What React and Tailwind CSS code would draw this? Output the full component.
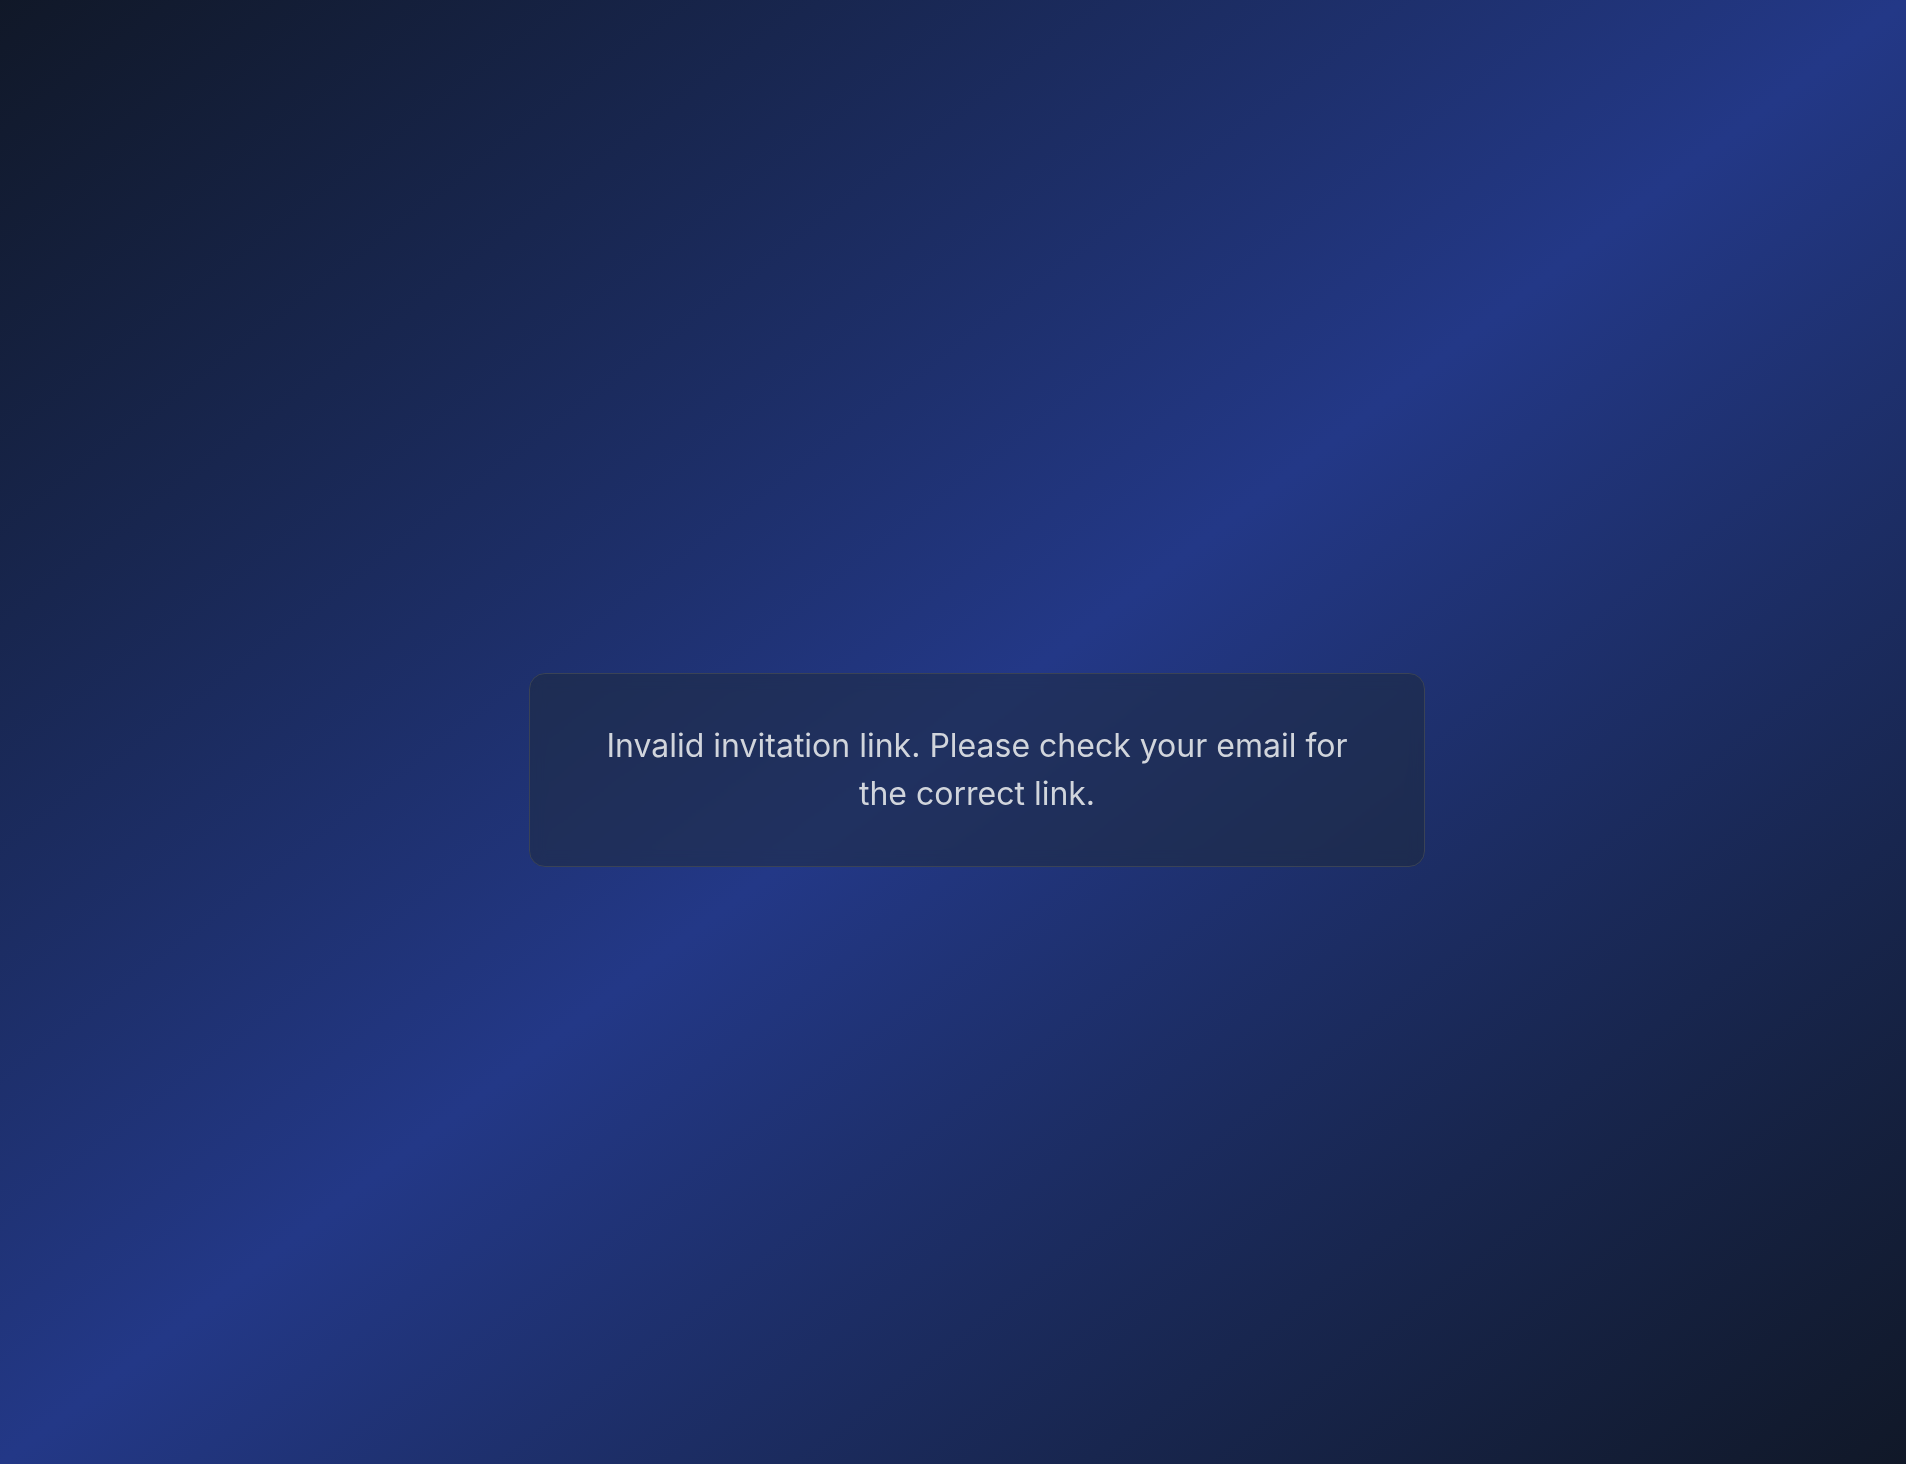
export default function App() {
  return (
    <div
      className="flex min-h-screen items-center justify-center bg-gradient-to-br from-gray-900 via-[#233887] to-gray-900 pl-12 pt-[76px]"
      style={{ fontFamily: "Inter, 'Noto Sans', sans-serif" }}
    >
      {/* Error card */}
      <div className="w-full max-w-4xl rounded-2xl border border-[#3a4356] bg-gray-800/50 p-12 text-center backdrop-blur">
        <p className="text-[32px] leading-[48px] text-gray-300">
          Invalid invitation link. Please check your email for the correct link.
        </p>
      </div>
    </div>
  );
}
